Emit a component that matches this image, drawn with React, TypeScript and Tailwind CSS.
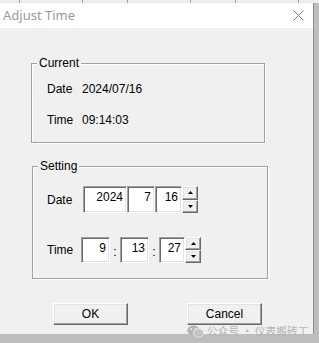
import React from 'react'

const sunken =
  'border border-t-[#a0a0a0] border-l-[#a0a0a0] border-r-white border-b-white shadow-[inset_1px_1px_0_#696969,inset_-1px_-1px_0_#e3e3e3] bg-white'
const raised =
  'border border-t-white border-l-white border-r-[#696969] border-b-[#696969] shadow-[inset_-1px_-1px_0_#a0a0a0,inset_1px_1px_0_#e3e3e3] bg-[#f0f0f0]'

function Field({ value, width }: { value: string; width: string }) {
  return (
    <div className={`${sunken} ${width} h-full text-right pr-[3px] pt-[3px] leading-[14px]`}>
      {value}
    </div>
  )
}

function Spinner() {
  return (
    <div className="flex flex-col w-[16px] h-full">
      <div className={`${raised} flex-1 flex items-center justify-center`}>
        <svg width="5" height="3" viewBox="0 0 5 3">
          <path d="M2.5 0 L5 3 L0 3 Z" fill="#000" />
        </svg>
      </div>
      <div className={`${raised} flex-1 flex items-center justify-center`}>
        <svg width="5" height="3" viewBox="0 0 5 3">
          <path d="M0 0 L5 0 L2.5 3 Z" fill="#000" />
        </svg>
      </div>
    </div>
  )
}

function GroupBox({ label, className, children }: { label: string; className: string; children: React.ReactNode }) {
  return (
    <div className={`relative border border-[#a0a0a0] shadow-[inset_1px_1px_0_#fff,1px_1px_0_#fff] ${className}`}>
      <span className="absolute left-[5px] top-[-8px] px-[2px] bg-[#f0f0f0] leading-[14px]">{label}</span>
      {children}
    </div>
  )
}

function WeChatIcon() {
  return (
    <svg width="17" height="13" viewBox="0 0 17 13">
      <ellipse cx="6.5" cy="5.5" rx="6.2" ry="5" fill="#b4b4b4" />
      <ellipse cx="11.5" cy="8" rx="5.2" ry="4.3" fill="#c4c4c4" stroke="#f0f0f0" strokeWidth="0.8" />
      <circle cx="4.3" cy="4" r="0.9" fill="#f0f0f0" />
      <circle cx="8.5" cy="4" r="0.9" fill="#f0f0f0" />
    </svg>
  )
}

export default function App() {
  return (
    <div className="relative w-[319px] h-[343px] overflow-hidden bg-[#bdbdbd] text-[12px] text-black font-['Liberation_Sans',Arial,sans-serif]">
      {/* window edge behind the dialog */}
      <div className="h-[3px] bg-[#ececec] flex">
        <div className="ml-[19px] w-px bg-[#a0a0a0]" />
        <div className="ml-[62px] w-px bg-[#a0a0a0]" />
        <div className="ml-[44px] w-px bg-[#a0a0a0]" />
        <div className="ml-[62px] w-px bg-[#a0a0a0]" />
        <div className="ml-[44px] w-px bg-[#a0a0a0]" />
        <div className="ml-[62px] w-px bg-[#a0a0a0]" />
      </div>

      <div className="flex">
        <div className="w-[314px] h-[331px] flex flex-col border-r border-[#8c8c8c]">
          <div className="h-[25px] bg-white flex items-center justify-between pl-[3px] pr-[9px]">
            <span className="text-[13px] text-[#9a9a9a] font-['Noto_Sans',sans-serif] leading-none">Adjust Time</span>
            <svg width="11" height="11" viewBox="0 0 11 11">
              <path d="M0.5 0.5 L10.5 10.5 M10.5 0.5 L0.5 10.5" stroke="#808080" strokeWidth="1" />
            </svg>
          </div>

          <div className="flex-1 bg-[#f0f0f0] flex flex-col">
            <GroupBox label="Current" className="mt-[35px] ml-[31px] w-[234px] h-[80px]">
              <div className="flex flex-col gap-[17px] pt-[18px] pl-[15px] leading-[14px]">
                <div className="flex">
                  <span className="w-[35px]">Date</span>
                  <span>2024/07/16</span>
                </div>
                <div className="flex">
                  <span className="w-[35px]">Time</span>
                  <span>09:14:03</span>
                </div>
              </div>
            </GroupBox>

            <GroupBox label="Setting" className="mt-[23px] ml-[32px] w-[236px] h-[113px]">
              <div className="flex flex-col pt-[19px] pl-[14px]">
                <div className="flex items-center h-[27px]">
                  <span className="w-[36px] leading-[14px]">Date</span>
                  <Field value="2024" width="w-[44px]" />
                  <Field value="7" width="w-[28px]" />
                  <Field value="16" width="w-[27px]" />
                  <Spinner />
                </div>
                <div className="flex items-center h-[26px] mt-[24px]">
                  <span className="w-[34px] leading-[14px]">Time</span>
                  <Field value="9" width="w-[29px]" />
                  <span className="w-[10px] text-center self-end pb-[4px] leading-[14px]">:</span>
                  <Field value="13" width="w-[29px]" />
                  <span className="w-[10px] text-center self-end pb-[4px] leading-[14px]">:</span>
                  <Field value="27" width="w-[26px]" />
                  <Spinner />
                </div>
              </div>
            </GroupBox>

            <div className="flex mt-[24px] ml-[53px] gap-[59px]">
              <button className={`${raised} w-[75px] h-[22px] leading-[14px]`}>OK</button>
              <button className={`${raised} w-[75px] h-[22px] leading-[14px]`}>Cancel</button>
            </div>
          </div>
        </div>
      </div>

      {/* watermark over the corner */}
      <div className="absolute left-[187px] top-[325px] flex items-center gap-[3px] text-[10.75px] leading-none text-[#b4b4b4] font-['Noto_Sans_CJK_SC',sans-serif]">
        <WeChatIcon />
        <span>公众号 · 仪表搬砖工</span>
      </div>
    </div>
  )
}
